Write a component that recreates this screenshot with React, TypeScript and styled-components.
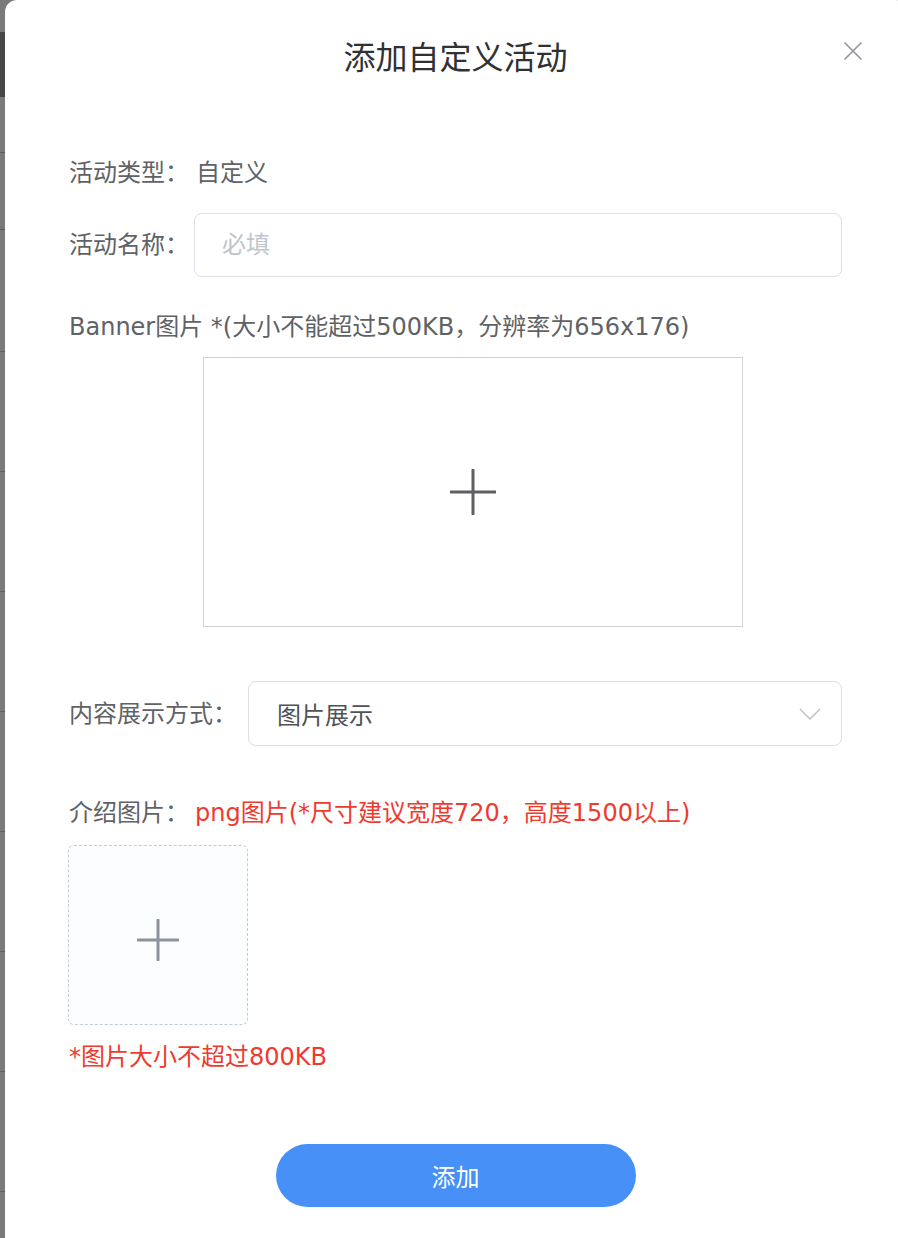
import React from "react";
import styled, { createGlobalStyle } from "styled-components";

const GlobalStyle = createGlobalStyle`
  html, body {
    margin: 0;
    padding: 0;
    width: 898px;
    height: 1238px;
    overflow: hidden;
    background: #7a7a7a;
  }
  * { box-sizing: border-box; }
  #root {
    font-family: "DejaVu Sans", "Noto Sans CJK SC", sans-serif;
  }
`;

const Page = styled.div`
  display: flex;
  width: 898px;
  height: 1238px;
  overflow: hidden;
`;

const Backdrop = styled.div`
  flex: 0 0 5px;
  height: 1238px;
  background:
    linear-gradient(#474747, #474747) 0 32px / 100% 65px no-repeat,
    linear-gradient(#5c5c5c, #5c5c5c) 0 152px / 100% 1px no-repeat,
    linear-gradient(#5c5c5c, #5c5c5c) 0 229px / 100% 1px no-repeat,
    repeating-linear-gradient(to bottom, #5f5f5f 0 1px, transparent 1px 120px) 0 351px / 100% 900px no-repeat,
    #7a7a7a;
`;

const Dialog = styled.div`
  position: relative;
  flex: 0 0 903px;
  min-height: 1238px;
  background: #fff;
  border-radius: 12px 12px 0 0;
  padding: 0 66px 0 64px;
  display: flex;
  flex-direction: column;
`;

const Header = styled.div`
  height: 110px;
  display: flex;
  align-items: center;
  justify-content: center;
`;

const Title = styled.h2`
  margin: 0;
  font-family: "Noto Sans CJK SC", sans-serif;
  font-size: 32px;
  font-weight: 400;
  line-height: 40px;
  color: #303133;
`;

const CloseButton = styled.button`
  position: absolute;
  top: 41px;
  right: 45px;
  width: 20px;
  height: 20px;
  padding: 0;
  border: none;
  background: transparent;
  display: flex;
  align-items: center;
  justify-content: center;
  cursor: pointer;
`;

const Body = styled.div`
  display: flex;
  flex-direction: column;
  padding-top: 46px;
`;

const Row = styled.div<{ $mt?: number; $gap?: number }>`
  display: flex;
  align-items: center;
  gap: ${(p) => p.$gap ?? 0}px;
  margin-top: ${(p) => p.$mt ?? 0}px;
`;

const Label = styled.span<{ $color?: string }>`
  font-size: 24px;
  line-height: 34px;
  color: ${(p) => p.$color ?? "#606266"};
  white-space: nowrap;
`;

const TextInput = styled.input`
  flex: 0 0 648px;
  height: 64px;
  border: 1px solid #dcdfe6;
  border-radius: 8px;
  padding: 0 27px;
  font-family: inherit;
  font-size: 24px;
  color: #606266;
  outline: none;
  &::placeholder {
    color: #c0c4cc;
  }
`;

const Select = styled.div`
  flex: 0 0 594px;
  height: 65px;
  border: 1px solid #dcdfe6;
  border-radius: 8px;
  padding: 0 20px 0 28px;
  display: flex;
  align-items: center;
  justify-content: space-between;
  font-size: 24px;
  color: #505256;
`;

const Text = styled.div<{ $mt: number; $color?: string }>`
  margin-top: ${(p) => p.$mt}px;
  font-size: 24px;
  line-height: 34px;
  color: ${(p) => p.$color ?? "#606266"};
  white-space: nowrap;
`;

const BannerUpload = styled.div`
  margin: 13px 0 0 134px;
  width: 540px;
  height: 270px;
  border: 1px solid #d2d2d2;
  display: flex;
  align-items: center;
  justify-content: center;
`;

const CardUpload = styled.div`
  margin: 15px 0 0 -1px;
  width: 180px;
  height: 180px;
  padding-top: 10px;
  border: 1px dashed #c0ccda;
  border-radius: 6px;
  background: #fbfdff;
  display: flex;
  align-items: center;
  justify-content: center;
`;

const SubmitButton = styled.button`
  align-self: center;
  margin-top: 70px;
  width: 360px;
  height: 63px;
  border: none;
  border-radius: 32px;
  background: #4690f7;
  color: #fff;
  font-family: "Noto Sans CJK SC", sans-serif;
  font-size: 24px;
  cursor: pointer;
`;

const RED = "#ef3a2e";

const Plus = ({ size, color, stroke }: { size: number; color: string; stroke: number }) => (
  <svg width={size} height={size} viewBox={`0 0 ${size} ${size}`}>
    <line x1={size / 2} y1={1} x2={size / 2} y2={size - 1} stroke={color} strokeWidth={stroke} strokeLinecap="round" />
    <line x1={1} y1={size / 2} x2={size - 1} y2={size / 2} stroke={color} strokeWidth={stroke} strokeLinecap="round" />
  </svg>
);

export default function App() {
  return (
    <>
      <GlobalStyle />
      <Page>
        <Backdrop />
        <Dialog>
          <Header>
            <Title>添加自定义活动</Title>
          </Header>
          <CloseButton aria-label="关闭">
            <svg width="20" height="20" viewBox="0 0 20 20">
              <path d="M2 2 L18 18 M18 2 L2 18" stroke="#909399" strokeWidth="1.6" strokeLinecap="round" fill="none" />
            </svg>
          </CloseButton>
          <Body>
            <Row $gap={7}>
              <Label>活动类型：</Label>
              <Label>自定义</Label>
            </Row>
            <Row $mt={23} $gap={5}>
              <Label>活动名称：</Label>
              <TextInput placeholder="必填" />
            </Row>
            <Text $mt={33}>Banner图片 *(大小不能超过500KB，分辨率为656x176)</Text>
            <BannerUpload>
              <Plus size={46} color="#5f5f62" stroke={3} />
            </BannerUpload>
            <Row $mt={54} $gap={11}>
              <Label>内容展示方式：</Label>
              <Select>
                <span>图片展示</span>
                <svg width="22" height="12" viewBox="0 0 22 12">
                  <path d="M1 1 L11 11 L21 1" stroke="#c0c4cc" strokeWidth="1.6" fill="none" />
                </svg>
              </Select>
            </Row>
            <Row $mt={50} $gap={6}>
              <Label>介绍图片：</Label>
              <Label $color={RED}>png图片(*尺寸建议宽度720，高度1500以上)</Label>
            </Row>
            <CardUpload>
              <Plus size={42} color="#8c939d" stroke={3} />
            </CardUpload>
            <Text $mt={15} $color={RED}>*图片大小不超过800KB</Text>
            <SubmitButton>添加</SubmitButton>
          </Body>
        </Dialog>
      </Page>
    </>
  );
}
